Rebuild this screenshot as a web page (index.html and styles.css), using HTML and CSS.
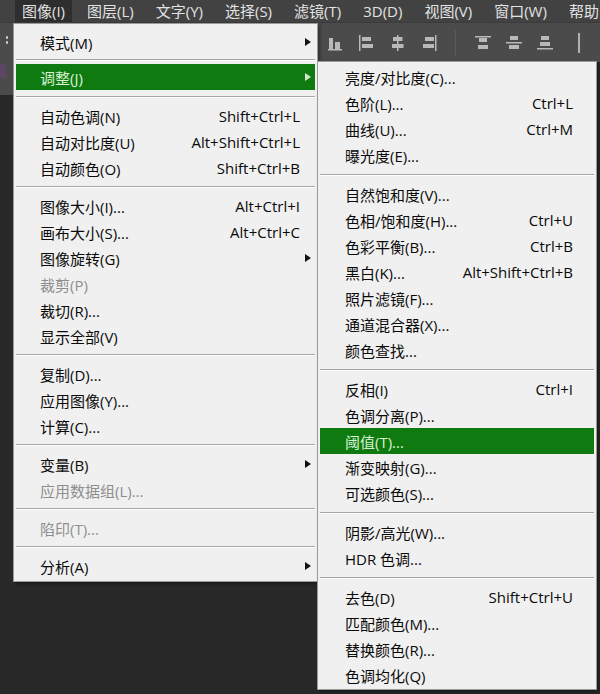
FILE: index.html
```html
<!DOCTYPE html>
<html lang="zh-CN">
<head>
	<meta charset="UTF-8">
	<title>图像菜单</title>
	<link rel="stylesheet" href="styles.css">
</head>
<body>
	<div class="app">
		<div class="menubar">
			<span class="mb-item mb-open">图像(I)</span>
			<span class="mb-item">图层(L)</span>
			<span class="mb-item">文字(Y)</span>
			<span class="mb-item">选择(S)</span>
			<span class="mb-item">滤镜(T)</span>
			<span class="mb-item">3D(D)</span>
			<span class="mb-item">视图(V)</span>
			<span class="mb-item">窗口(W)</span>
			<span class="mb-item">帮助</span>
		</div>
		<div class="toolbar">
			<span class="grip"></span>
			<div class="tb-group">
				<svg class="tb-icon" viewBox="0 0 18 18"><rect x="2" y="4" width="4" height="11"/><rect x="8" y="8" width="5" height="7"/><rect x="1" y="15" width="14" height="1.5"/></svg>
				<svg class="tb-icon" viewBox="0 0 18 18"><rect x="1" y="1" width="1.5" height="16"/><rect x="4" y="3" width="9" height="4"/><rect x="4" y="10" width="11" height="4"/></svg>
				<svg class="tb-icon" viewBox="0 0 18 18"><rect x="8" y="1" width="1.5" height="16"/><rect x="4" y="3" width="9.5" height="4"/><rect x="3" y="10" width="11.5" height="4"/></svg>
				<svg class="tb-icon" viewBox="0 0 18 18"><rect x="15" y="1" width="1.5" height="16"/><rect x="5" y="3" width="9" height="4"/><rect x="3" y="10" width="11" height="4"/></svg>
			</div>
			<span class="tb-sep"></span>
			<div class="tb-group">
				<svg class="tb-icon" viewBox="0 0 18 18"><rect x="1" y="2" width="16" height="1.5"/><rect x="5" y="4" width="8" height="4"/><rect x="4" y="11" width="10" height="4"/></svg>
				<svg class="tb-icon" viewBox="0 0 18 18"><rect x="5" y="2" width="8" height="4"/><rect x="1" y="8" width="16" height="1.5"/><rect x="4" y="11" width="10" height="4"/></svg>
				<svg class="tb-icon" viewBox="0 0 18 18"><rect x="5" y="2" width="8" height="4"/><rect x="4" y="8" width="10" height="4"/><rect x="1" y="14" width="16" height="1.5"/></svg>
			</div>
			<span class="tb-bar"></span>
		</div>
		<div class="workspace">
			<div class="tools-head"><span class="tools-mark"></span></div>
		</div>

		<!-- 图像菜单 -->
		<div class="menu menu-main">
			<div class="item">模式(M)<i class="arrow"></i></div>
			<div class="sep sep-sm"></div>
			<div class="item active">调整(J)<i class="arrow"></i></div>
			<div class="sep sep-lg"></div>
			<div class="item">自动色调(N)<span class="key">Shift+Ctrl+L</span></div>
			<div class="item">自动对比度(U)<span class="key">Alt+Shift+Ctrl+L</span></div>
			<div class="item">自动颜色(O)<span class="key">Shift+Ctrl+B</span></div>
			<div class="sep"></div>
			<div class="item">图像大小(I)...<span class="key">Alt+Ctrl+I</span></div>
			<div class="item">画布大小(S)...<span class="key">Alt+Ctrl+C</span></div>
			<div class="item">图像旋转(G)<i class="arrow"></i></div>
			<div class="item disabled">裁剪(P)</div>
			<div class="item">裁切(R)...</div>
			<div class="item">显示全部(V)</div>
			<div class="sep"></div>
			<div class="item">复制(D)...</div>
			<div class="item">应用图像(Y)...</div>
			<div class="item">计算(C)...</div>
			<div class="sep"></div>
			<div class="item">变量(B)<i class="arrow"></i></div>
			<div class="item disabled">应用数据组(L)...</div>
			<div class="sep"></div>
			<div class="item disabled">陷印(T)...</div>
			<div class="sep"></div>
			<div class="item">分析(A)<i class="arrow"></i></div>
		</div>

		<!-- 调整子菜单 -->
		<div class="menu menu-sub">
			<div class="item">亮度/对比度(C)...</div>
			<div class="item">色阶(L)...<span class="key">Ctrl+L</span></div>
			<div class="item">曲线(U)...<span class="key">Ctrl+M</span></div>
			<div class="item">曝光度(E)...</div>
			<div class="sep"></div>
			<div class="item">自然饱和度(V)...</div>
			<div class="item">色相/饱和度(H)...<span class="key">Ctrl+U</span></div>
			<div class="item">色彩平衡(B)...<span class="key">Ctrl+B</span></div>
			<div class="item">黑白(K)...<span class="key">Alt+Shift+Ctrl+B</span></div>
			<div class="item">照片滤镜(F)...</div>
			<div class="item">通道混合器(X)...</div>
			<div class="item">颜色查找...</div>
			<div class="sep"></div>
			<div class="item">反相(I)<span class="key">Ctrl+I</span></div>
			<div class="item">色调分离(P)...</div>
			<div class="item active">阈值(T)...</div>
			<div class="item">渐变映射(G)...</div>
			<div class="item">可选颜色(S)...</div>
			<div class="sep"></div>
			<div class="item">阴影/高光(W)...</div>
			<div class="item">HDR 色调...</div>
			<div class="sep"></div>
			<div class="item">去色(D)<span class="key">Shift+Ctrl+U</span></div>
			<div class="item">匹配颜色(M)...</div>
			<div class="item">替换颜色(R)...</div>
			<div class="item">色调均化(Q)</div>
		</div>
	</div>
</body>
</html>
```
FILE: styles.css
```css
*{
	margin: 0;
	padding: 0;
	box-sizing: border-box;
}
body{
	background: #262626;
	font-family: "Open Sans", "Noto Sans CJK SC", sans-serif;
	font-size: 15px;
}
.app{
	position: relative;
	width: 600px;
	height: 694px;
	overflow: hidden;
	display: flex;
	flex-direction: column;
}
/* 顶部菜单栏 */
.menubar{
	height: 22px;
	background: #424242;
	display: flex;
	align-items: center;
	padding-left: 15px;
	white-space: nowrap;
}
.mb-item{
	height: 22px;
	line-height: 22px;
	padding: 0 7px;
	margin-right: 8px;
	color: #e2e2e2;
}
.mb-open{
	background: #2e2e2e;
}
/* 工具选项栏 */
.toolbar{
	height: 40px;
	background: #4b4b4b;
	border-top: 1px solid #3b3b3b;
	display: flex;
	align-items: center;
}
.grip{
	width: 13px;
	height: 100%;
	background: radial-gradient(circle, #cfcfcf 1px, transparent 1.5px) 5px 12px / 4px 5px no-repeat,
		radial-gradient(circle, #cfcfcf 1px, transparent 1.5px) 5px 17px / 4px 5px no-repeat;
}
.tb-group{
	display: flex;
	gap: 13px;
}
.tb-group:first-of-type{
	margin-left: 314px;
}
.tb-icon{
	width: 18px;
	height: 18px;
	fill: #b9b9b9;
}
.tb-sep{
	width: 1px;
	height: 26px;
	background: #3a3a3a;
	border-right: 1px solid #5a5a5a;
	margin: 0 18px 0 17px;
}
.tb-bar{
	width: 2px;
	height: 20px;
	background: #b0b0b0;
	margin-left: 24px;
}
.workspace{
	flex: 1;
	background: #282828;
}
.tools-head{
	width: 13px;
	height: 33px;
	background: #4b4b4b;
	padding-top: 2px;
}
.tools-mark{
	display: block;
	width: 6px;
	height: 14px;
	background: #5c4763;
}
/* 下拉菜单 */
.menu{
	position: absolute;
	background: #f0f0f0;
	border: 1px solid #9a9a9a;
	box-shadow: 2px 2px 3px rgba(0,0,0,.35);
}
.menu-main{
	left: 13px;
	top: 23px;
	width: 305px;
	padding: 5px 0 2px;
	z-index: 1;
}
.menu-sub{
	left: 317px;
	top: 61px;
	width: 280px;
	padding: 2px 0 1px;
	z-index: 2;
}
.item{
	position: relative;
	height: 26px;
	display: flex;
	align-items: center;
	justify-content: space-between;
	margin: 0 2px;
	color: #0a0a0a;
	white-space: nowrap;
}
.menu-main .item{
	padding: 0 15px 0 24px;
}
.menu-sub .item{
	padding: 0 21px 0 25px;
}
.item.active{
	background: #0f7a0f;
	color: #d9f2d4;
}
.item.disabled{
	color: #8e8e8e;
}
.arrow{
	position: absolute;
	right: 4px;
	top: 9px;
	border-left: 6px solid #111;
	border-top: 4px solid transparent;
	border-bottom: 4px solid transparent;
}
.active .arrow{
	border-left-color: #cfeacb;
}
.sep{
	height: 12px;
	display: flex;
	align-items: center;
	margin: 0 2px;
}
.sep::before{
	content: "";
	flex: 1;
	height: 1px;
	background: #a6a6a6;
	border-bottom: 1px solid #fff;
	box-sizing: content-box;
}
.menu-main .sep-sm{
	height: 9px;
}
.menu-main .sep-lg{
	height: 13px;
}
.menu-sub .sep{
	height: 13px;
}
```
